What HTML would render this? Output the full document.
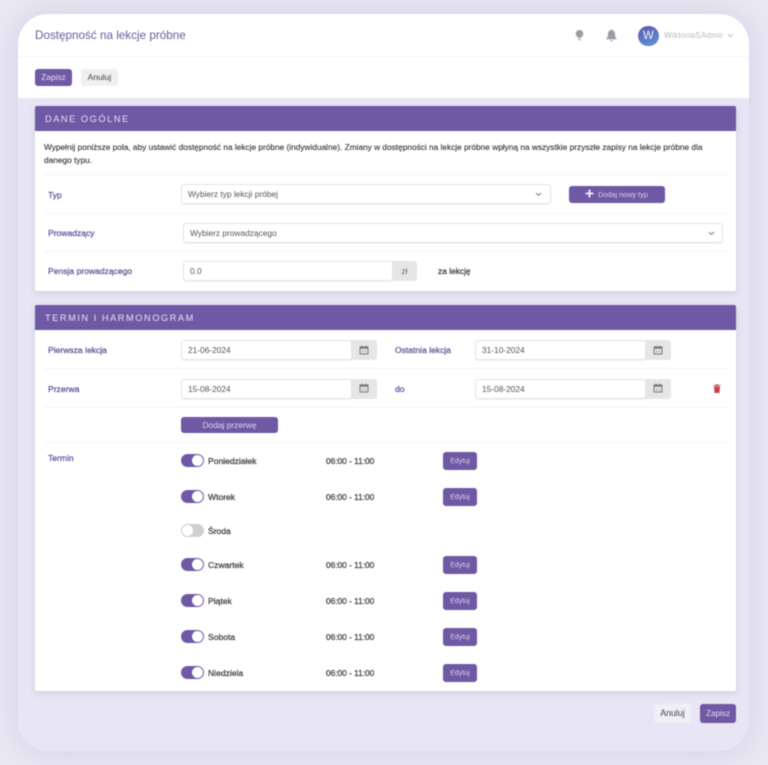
<!DOCTYPE html>
<html lang="pl">
<head>
<meta charset="utf-8">
<title>Dostępność na lekcje próbne</title>
<style>
html,body{margin:0;padding:0;width:768px;height:765px;overflow:hidden;background:#e9e8f3}
body{font-family:"Liberation Sans",sans-serif;position:relative;color:#333}
#root{position:absolute;inset:0;filter:blur(.4px)}
.a{position:absolute;box-sizing:border-box;white-space:nowrap}
.card{left:18px;top:14px;width:731px;height:737px;background:#e8e6f4;border-radius:30px;box-shadow:0 0 28px rgba(140,138,180,.26);overflow:hidden}
.white{background:#fff}
.panel{background:#fff;left:35px;width:701px;border-radius:2px;box-shadow:0 2px 7px rgba(120,115,160,.24)}
.ph{left:35px;width:701px;height:25.7px;background:#6f58a4;color:#e6e1f2;font-size:9.300px;letter-spacing:1.500px;line-height:26.500px;padding-left:10px;border-radius:2px 2px 0 0}
.hr{left:44px;width:684px;height:1px;background:#f4f4f6}
.lb{left:48px;color:#6b5a9e;font-size:8.550px;-webkit-text-stroke:.3px #6b5a9e;line-height:12px}
.inp{height:20px;border:1px solid #e3e3e7;border-radius:3px;background:#fff;color:#555;font-size:8.350px;line-height:18px;padding-left:6px;box-shadow:0 1px 1px rgba(0,0,0,.05)}
.cal{width:26px;height:20px;background:#e6e6e8;border-radius:0 3px 3px 0}
.btn{background:#6f58a4;color:#e5e0f2;border-radius:3px;text-align:center}
.day{left:208px;font-size:8.550px;-webkit-text-stroke:.28px #444;color:#444;line-height:12px}
.time{left:326px;font-size:8.300px;-webkit-text-stroke:.28px #444;color:#444;line-height:12px}
.ed{left:443px;width:34px;height:18px;font-size:7px;line-height:19.500px;color:#d9d3ec}
.tg{left:181px;width:22.500px;height:13px;border-radius:7px;background:#6f58a4}
.tg:after{content:"";position:absolute;right:1px;top:1px;width:11px;height:11px;border-radius:50%;background:#fff}
.tg.off{background:#cfcfd2}
.tg.off:after{right:auto;left:1px}
svg{position:absolute;display:block}
</style>
</head>
<body>
<div id="root">
<div class="a card"></div>
<div class="a white" style="left:18px;top:14px;width:731px;height:84px;border-radius:30px 30px 0 0"></div>
<div class="a" style="left:18px;top:56px;width:731px;height:1px;background:#f5f5f7"></div>
<div class="a" style="left:35px;top:27.500px;font-size:11.700px;line-height:16px;color:#6c5a9d">Dostępność na lekcje próbne</div>

<svg style="left:574px;top:29px" width="11" height="13" viewBox="0 0 11 13"><path d="M5.500 1a3.800 3.800 0 0 0-2.400 6.700c.5.4.7.9.8 1.300h3.200c.1-.4.3-.9.8-1.300A3.800 3.800 0 0 0 5.500 1z" fill="#9a9ca3"/><path d="M4.200 10h2.600v1.200H4.200z" fill="#9a9ca3"/></svg>
<svg style="left:605px;top:28px" width="13" height="14" viewBox="0 0 13 14"><path d="M6.500 1.200c-.5 0-.8.3-.8.8v.3C3.900 2.700 3 4.200 3 6c0 2.800-.7 3.700-1.600 4.600v.7h10.200v-.7C10.700 9.700 10 8.800 10 6c0-1.800-.9-3.300-2.700-3.700V2c0-.5-.3-.8-.8-.8z" fill="#9a9ca3"/><path d="M5.200 12h2.600a1.300 1.300 0 0 1-2.600 0z" fill="#9a9ca3"/></svg>

<div class="a" style="left:638px;top:25.500px;width:20.500px;height:20.500px;border-radius:50%;background:linear-gradient(160deg,#6256a8,#5f96dc);color:#e8eefa;font-size:11.500px;line-height:21px;text-align:center">W</div>
<div class="a" style="left:664px;top:29.500px;font-size:8.200px;letter-spacing:.2px;line-height:12px;color:#b8b9c0">WiktoriaSAdmir</div>
<svg style="left:726.500px;top:33px" width="7" height="5" viewBox="0 0 7 5"><path d="M1 1l2.500 2.500L6 1" fill="none" stroke="#c3c4ca" stroke-width="1"/></svg>

<div class="a btn" style="left:35px;top:69px;width:37px;height:17px;font-size:8.400px;line-height:17.500px">Zapisz</div>
<div class="a" style="left:81px;top:69px;width:37px;height:17px;background:#f0f0f1;border-radius:3px;font-size:8.500px;line-height:17.500px;text-align:center;color:#444">Anuluj</div>

<div class="a panel" style="top:105.500px;height:185.500px"></div>
<div class="a ph" style="top:105.500px">DANE OGÓLNE</div>
<div class="a" style="left:44px;top:141px;font-size:8.300px;line-height:13px;color:#2e2e2e;-webkit-text-stroke:.08px #2e2e2e">Wypełnij poniższe pola, aby ustawić dostępność na lekcje próbne (indywidualne). Zmiany w dostępności na lekcje próbne wpłyną na wszystkie przyszłe zapisy na lekcje próbne dla<br>danego typu.</div>
<div class="a hr" style="top:174px"></div>
<div class="a lb" style="top:189px">Typ</div>
<div class="a inp" style="left:181px;top:184px;width:370px">Wybierz typ lekcji próbej</div>
<svg style="left:535px;top:192px" width="7" height="5" viewBox="0 0 7 5"><path d="M1 1l2.500 2.500L6 1" fill="none" stroke="#777" stroke-width=".9"/></svg>
<div class="a btn" style="left:569px;top:186px;width:96px;height:17px"></div>
<svg style="left:585px;top:189px" width="9" height="9" viewBox="0 0 9 9"><path d="M4.500 .5v8M.5 4.500h8" stroke="#f2effa" stroke-width="1.800" fill="none"/></svg>
<div class="a" style="left:598px;top:189px;font-size:7.300px;line-height:12px;color:#d9d3ec">Dodaj nowy typ</div>
<div class="a hr" style="top:213px"></div>
<div class="a lb" style="top:227px">Prowadzący</div>
<div class="a inp" style="left:183px;top:223px;width:540px">Wybierz prowadzącego</div>
<svg style="left:708px;top:231px" width="7" height="5" viewBox="0 0 7 5"><path d="M1 1l2.500 2.500L6 1" fill="none" stroke="#777" stroke-width=".9"/></svg>
<div class="a hr" style="top:251px"></div>
<div class="a lb" style="top:265px">Pensja prowadzącego</div>
<div class="a inp" style="left:183px;top:261px;width:210px">0.0</div>
<div class="a" style="left:392px;top:261px;width:25px;height:20px;background:#e6e6e8;border-radius:0 3px 3px 0;font-size:8.200px;line-height:21px;text-align:center;color:#666">zł</div>
<div class="a" style="left:438px;top:265px;font-size:8.400px;-webkit-text-stroke:.28px #444;line-height:12px;color:#444">za lekcję</div>

<div class="a panel" style="top:304.500px;height:386.500px"></div>
<div class="a ph" style="top:304.500px">TERMIN I HARMONOGRAM</div>

<div class="a lb" style="top:344px">Pierwsza lekcja</div>
<div class="a inp" style="left:181px;top:340px;width:171px">21-06-2024</div>
<div class="a cal" style="left:351px;top:340px"></div>
<svg style="left:359px;top:345px" width="10" height="10" viewBox="0 0 10 10"><path d="M1 2h8v7H1z" fill="none" stroke="#777" stroke-width="1"/><path d="M1 1.700h8v2H1zM2.500.6h1v1.500h-1zM6.500.6h1v1.500h-1z" fill="#777"/><path d="M3 5.500h1v2H3zM6 5.500h1v2H6z" fill="#999"/></svg>
<div class="a lb" style="left:395px;top:344px">Ostatnia lekcja</div>
<div class="a inp" style="left:475px;top:340px;width:171px">31-10-2024</div>
<div class="a cal" style="left:645px;top:340px"></div>
<svg style="left:653px;top:345px" width="10" height="10" viewBox="0 0 10 10"><path d="M1 2h8v7H1z" fill="none" stroke="#777" stroke-width="1"/><path d="M1 1.700h8v2H1zM2.500.6h1v1.500h-1zM6.500.6h1v1.500h-1z" fill="#777"/><path d="M3 5.500h1v2H3zM6 5.500h1v2H6z" fill="#999"/></svg>
<div class="a hr" style="top:368px"></div>

<div class="a lb" style="top:382.500px">Przerwa</div>
<div class="a inp" style="left:181px;top:379px;width:171px">15-08-2024</div>
<div class="a cal" style="left:351px;top:379px"></div>
<svg style="left:359px;top:383px" width="10" height="10" viewBox="0 0 10 10"><path d="M1 2h8v7H1z" fill="none" stroke="#777" stroke-width="1"/><path d="M1 1.700h8v2H1zM2.500.6h1v1.500h-1zM6.500.6h1v1.500h-1z" fill="#777"/><path d="M3 5.500h1v2H3zM6 5.500h1v2H6z" fill="#999"/></svg>
<div class="a lb" style="left:395px;top:382.500px">do</div>
<div class="a inp" style="left:475px;top:379px;width:171px">15-08-2024</div>
<div class="a cal" style="left:645px;top:379px"></div>
<svg style="left:653px;top:383px" width="10" height="10" viewBox="0 0 10 10"><path d="M1 2h8v7H1z" fill="none" stroke="#777" stroke-width="1"/><path d="M1 1.700h8v2H1zM2.500.6h1v1.500h-1zM6.500.6h1v1.500h-1z" fill="#777"/><path d="M3 5.500h1v2H3zM6 5.500h1v2H6z" fill="#999"/></svg>
<svg style="left:713px;top:384px" width="8" height="9" viewBox="0 0 8 9"><path d="M1 2.500h6L6.500 9h-5zM.6 1h6.800v1H.6zM3 .2h2V1H3z" fill="#c9404f"/></svg>
<div class="a hr" style="top:407px"></div>

<div class="a btn" style="left:181px;top:417px;width:97px;height:16px;font-size:8.400px;line-height:16.500px;color:#dcd6ee">Dodaj przerwę</div>
<div class="a hr" style="top:442px"></div>

<div class="a lb" style="top:452px">Termin</div>

<div class="a tg" style="top:454px"></div><div class="a day" style="top:455px">Poniedziałek</div><div class="a time" style="top:455px">06:00 - 11:00</div><div class="a btn ed" style="top:452px">Edytuj</div>
<div class="a tg" style="top:490px"></div><div class="a day" style="top:491px">Wtorek</div><div class="a time" style="top:491px">06:00 - 11:00</div><div class="a btn ed" style="top:488px">Edytuj</div>
<div class="a tg off" style="top:524px"></div><div class="a day" style="top:525px">Środa</div>
<div class="a tg" style="top:558px"></div><div class="a day" style="top:559px">Czwartek</div><div class="a time" style="top:559px">06:00 - 11:00</div><div class="a btn ed" style="top:556px">Edytuj</div>
<div class="a tg" style="top:594px"></div><div class="a day" style="top:595px">Piątek</div><div class="a time" style="top:595px">06:00 - 11:00</div><div class="a btn ed" style="top:592px">Edytuj</div>
<div class="a tg" style="top:630px"></div><div class="a day" style="top:631px">Sobota</div><div class="a time" style="top:631px">06:00 - 11:00</div><div class="a btn ed" style="top:628px">Edytuj</div>
<div class="a tg" style="top:666px"></div><div class="a day" style="top:667px">Niedziela</div><div class="a time" style="top:667px">06:00 - 11:00</div><div class="a btn ed" style="top:664px">Edytuj</div>

<div class="a" style="left:654px;top:704px;width:37px;height:19px;background:#f0eff6;border-radius:3px;font-size:8.800px;line-height:19.500px;text-align:center;color:#444">Anuluj</div>
<div class="a btn" style="left:700px;top:704px;width:36px;height:19px;font-size:8.200px;line-height:19.500px">Zapisz</div>
</div>
</body>
</html>
